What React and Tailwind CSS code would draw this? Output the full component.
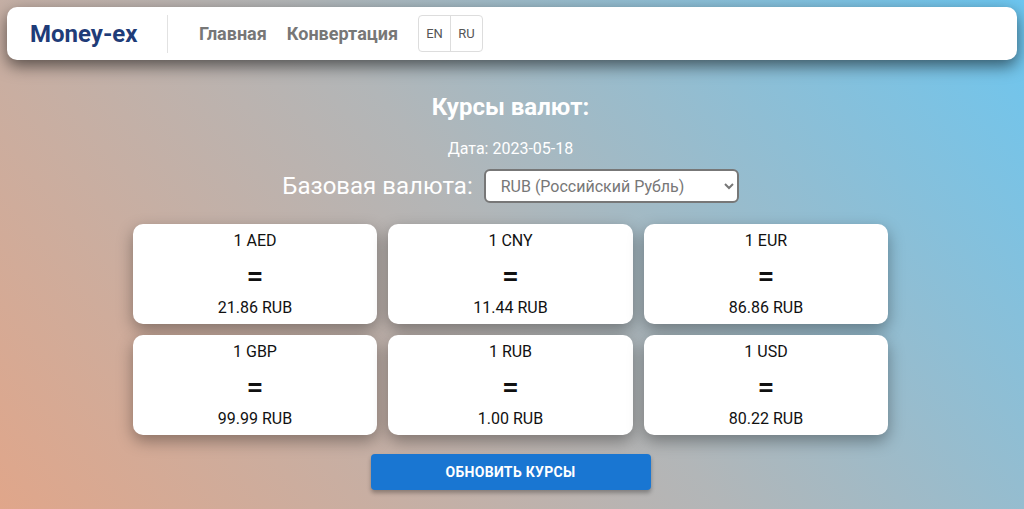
const rates = [
  { code: "AED", value: "21.86" },
  { code: "CNY", value: "11.44" },
  { code: "EUR", value: "86.86" },
  { code: "GBP", value: "99.99" },
  { code: "RUB", value: "1.00" },
  { code: "USD", value: "80.22" },
];

const RateCard = ({ code, value }) => (
  <div className="h-[100px] bg-white rounded-[10px] shadow-[0_6px_16px_rgba(0,0,0,0.35)] flex flex-col items-center pt-[7px] text-[#111] text-[16px]">
    <div className="leading-[20px]">1 {code}</div>
    <div className="text-[30px] leading-[36px] mt-[7px] font-medium">=</div>
    <div className="leading-[20px] mt-[4px]">{value} RUB</div>
  </div>
);

const App = () => {
  return (
    <div
      className="w-[1024px] h-[509px] overflow-hidden bg-linear-[50deg] from-[#e0a68a] via-[#b2b6b8] to-[#6cc6f0] pt-[7px] px-[7px]"
      style={{ fontFamily: "Roboto, 'Liberation Sans', sans-serif" }}
    >
      {/* Navbar */}
      <header className="h-[53px] bg-white rounded-[10px] shadow-[0_6px_16px_rgba(0,0,0,0.55)] flex items-center pl-[23px] pr-4">
        <div className="text-[24px] font-bold text-[#1f3c78] w-[137px]">Money-ex</div>
        <div className="w-px h-[38px] bg-[#e2e2e2]"></div>
        <nav className="flex items-center gap-[20px] ml-[31px] text-[18px] font-bold text-[#777]">
          <a>Главная</a>
          <a>Конвертация</a>
        </nav>
        <div className="ml-[20px] flex h-[37px] border border-[#ddd] rounded-[4px] text-[13px] text-[#555]">
          <button className="w-[32px] border-r border-[#ddd]">EN</button>
          <button className="w-[31px]">RU</button>
        </div>
      </header>

      {/* Rates */}
      <main className="flex flex-col items-center text-white pr-[3px]">
        <h1 className="mt-[32px] text-[24px] font-bold leading-[30px]">Курсы валют:</h1>
        <p className="mt-[17px] text-[16px] leading-[20px]">Дата: 2023-05-18</p>
        <div className="mt-[10px] flex items-center gap-[11px]">
          <label className="text-[24px] leading-[28px]">Базовая валюта:</label>
          <select className="w-[255px] h-[34px] bg-white text-[#777] text-[16px] border-2 border-[#777] rounded-[6px] pl-[11px] pr-[8px]">
            <option>RUB (Российский Рубль)</option>
          </select>
        </div>

        <div className="mt-[21px] grid grid-cols-[244px_245px_244px] gap-x-[11px] gap-y-[11px]">
          {rates.map((r) => (
            <RateCard key={r.code} {...r} />
          ))}
        </div>

        <button className="mt-[19px] w-[280px] h-[36px] bg-[#1976d2] rounded-[4px] shadow-[0_3px_4px_rgba(0,0,0,0.3)] text-white text-[14px] font-bold uppercase tracking-[0.3px]">
          Обновить курсы
        </button>
      </main>
    </div>
  );
};

export default App;
